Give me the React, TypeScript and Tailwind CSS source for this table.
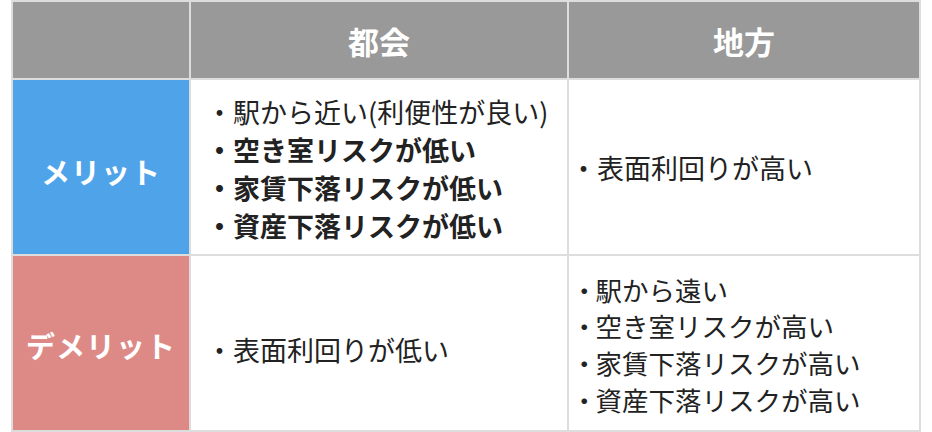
import React from 'react';

const font = { fontFamily: '"Noto Sans CJK JP", "Noto Sans", sans-serif' };

const toshiMerit = [
  { text: '駅から近い(利便性が良い)', bold: false },
  { text: '空き室リスクが低い', bold: true },
  { text: '家賃下落リスクが低い', bold: true },
  { text: '資産下落リスクが低い', bold: true },
];

const chihouDemerit = ['駅から遠い', '空き室リスクが高い', '家賃下落リスクが高い', '資産下落リスクが高い'];

export default function App() {
  return (
    <div className="w-[932px] h-[432px] bg-white px-[11px]" style={font}>
      <div className="grid grid-cols-[176px_376px_350px] grid-rows-[76px_174px_174px] gap-[2px] bg-[#dddddd] p-[2px] text-[#222222]">
        {/* ヘッダー */}
        <div className="bg-[#999999]"></div>
        <div className="bg-[#999999] flex items-center justify-center pt-[3px] text-white font-bold text-[31px]">都会</div>
        <div className="bg-[#999999] flex items-center justify-center pt-[3px] text-white font-bold text-[31px]">地方</div>

        {/* メリット */}
        <div className="bg-[#4fa4e9] flex items-center justify-center pt-[10px] text-white font-bold text-[29px] tracking-[1px]">メリット</div>
        <div className="bg-white flex flex-col justify-center pl-[15px] pt-[4px] text-[27px] leading-[38px]">
          {toshiMerit.map((item) => (
            <div key={item.text} className={item.bold ? 'font-bold' : ''}>・{item.text}</div>
          ))}
        </div>
        <div className="bg-white flex flex-col justify-center pl-[1px] text-[27px] leading-[37px]">
          <div>・表面利回りが高い</div>
        </div>

        {/* デメリット */}
        <div className="bg-[#dd8a87] flex items-center justify-center pt-[6px] text-white font-bold text-[29px] tracking-[1px]">デメリット</div>
        <div className="bg-white flex flex-col justify-center pl-[15px] pt-[12px] text-[27px] leading-[37px]">
          <div>・表面利回りが低い</div>
        </div>
        <div className="bg-white flex flex-col justify-center pl-[2px] pt-[4px] text-[26.5px] leading-[36.7px]">
          {chihouDemerit.map((t) => (
            <div key={t} className="flex">
              <span className="-mr-[2px]">・</span>
              <span>{t}</span>
            </div>
          ))}
        </div>
      </div>
    </div>
  );
}
